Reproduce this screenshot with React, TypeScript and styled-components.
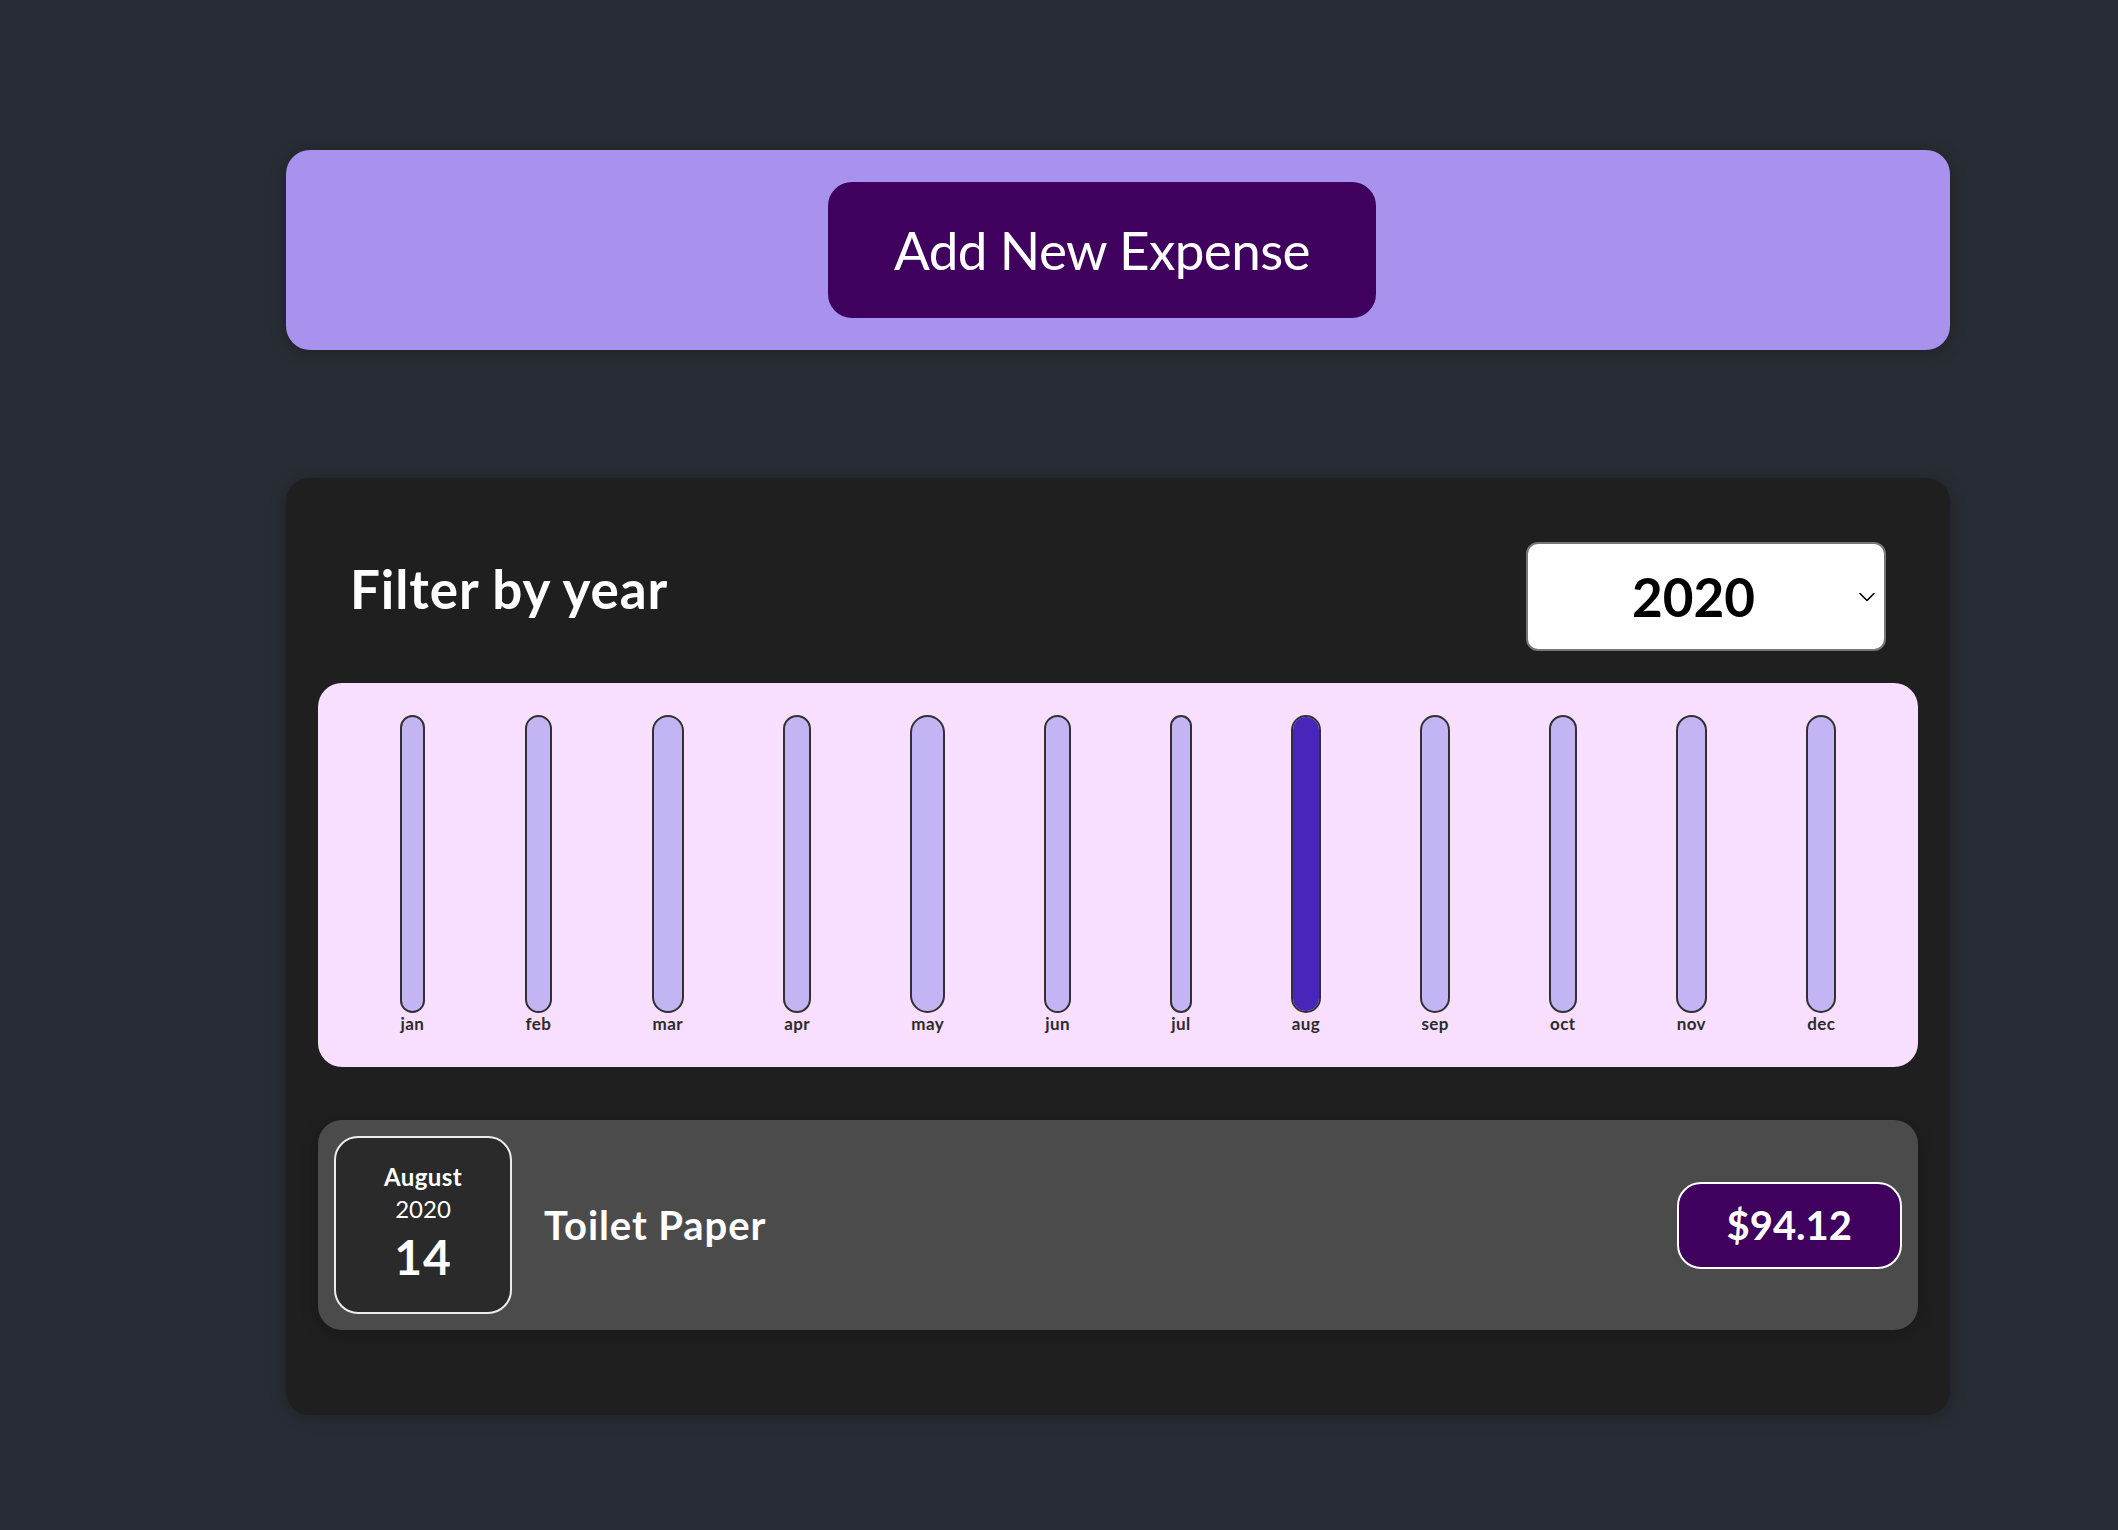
import React from "react";
import styled, { createGlobalStyle } from "styled-components";

const GlobalStyle = createGlobalStyle`
  html, body {
    margin: 0;
    padding: 0;
    background-color: #282c34;
    font-family: "Lato", "Open Sans", sans-serif;
  }
  * { box-sizing: border-box; }
`;

const Page = styled.div`
  display: flex;
  flex-direction: column;
  gap: 128px;
  padding: 150px 0 114px 286px;
`;

const Card = styled.div`
  width: 1664px;
  padding: 32px;
  border-radius: 24px;
  box-shadow: 0 2px 16px rgba(0, 0, 0, 0.25);
`;

const NewExpenseCard = styled(Card)`
  background-color: #a892ee;
  text-align: center;
`;

const AddButton = styled.button`
  font-family: "Lato", "Open Sans", sans-serif;
  font-size: 53px;
  line-height: 68px;
  letter-spacing: -0.6px;
  padding: 32px 64px;
  border: 2px solid #40005d;
  background-color: #40005d;
  color: #ffffff;
  border-radius: 24px;
  margin-right: 32px;
  cursor: pointer;
`;

const ExpensesCard = styled(Card)`
  background-color: #1f1f1f;
`;

const FilterBar = styled.div`
  color: #ffffff;
  padding: 0 32px;
`;

const FilterControl = styled.div`
  display: flex;
  width: 100%;
  align-items: center;
  justify-content: space-between;
  margin: 32px 0;
`;

const FilterLabel = styled.label`
  font-weight: 700;
  font-size: 53px;
  line-height: 70px;
  letter-spacing: 0.9px;
  margin-bottom: 16px;
`;

const SelectWrap = styled.div`
  position: relative;
  width: 360px;
  height: 109px;
`;

const YearSelect = styled.select`
  appearance: none;
  -webkit-appearance: none;
  width: 100%;
  height: 100%;
  font-family: "Lato", "Open Sans", sans-serif;
  font-size: 53px;
  font-weight: 700;
  color: #000000;
  background-color: #ffffff;
  border: 2px solid #767676;
  border-radius: 12px;
  padding: 0 0 0 104px;
  outline: none;
`;

const Chevron = styled.svg`
  position: absolute;
  right: 11px;
  top: 50%;
  transform: translateY(-50%);
  pointer-events: none;
`;

const Chart = styled.div`
  box-sizing: content-box;
  padding: 32px;
  border-radius: 24px;
  background-color: #f8dfff;
  text-align: center;
  display: flex;
  justify-content: space-around;
  height: 320px;
`;

const BarColumn = styled.div`
  height: 100%;
  display: flex;
  flex-direction: column;
  align-items: center;
`;

const BarInner = styled.div`
  flex: 1;
  width: calc(100% + 2px);
  border: 2px solid #313131;
  border-radius: 24px;
  background-color: #c3b4f3;
  overflow: hidden;
  display: flex;
  flex-direction: column;
  justify-content: flex-end;
`;

const BarFill = styled.div`
  background-color: #4826b9;
  width: 100%;
`;

const BarLabel = styled.div`
  font-weight: 700;
  font-size: 17px;
  line-height: 22px;
  letter-spacing: 0.4px;
  color: #2b2b2b;
  text-align: center;
`;

const ExpenseList = styled.ul`
  list-style: none;
  padding: 0;
  margin: 53px 0;
`;

const ExpenseRow = styled.li`
  display: flex;
  justify-content: space-between;
  align-items: center;
  padding: 16px;
  border-radius: 24px;
  background-color: #4b4b4b;
  box-shadow: 0 4px 16px rgba(0, 0, 0, 0.25);
`;

const DateBox = styled.div`
  display: flex;
  flex-direction: column;
  width: 178px;
  height: 178px;
  border: 2px solid #ececec;
  background-color: #2a2a2a;
  color: #ffffff;
  border-radius: 24px;
  align-items: center;
  justify-content: center;
  flex-shrink: 0;
`;

const DateMonth = styled.div`
  font-size: 24px;
  line-height: 32px;
  font-weight: 700;
  letter-spacing: 0.4px;
`;

const DateYear = styled.div`
  font-size: 24px;
  line-height: 32px;
`;

const DateDay = styled.div`
  font-size: 48px;
  line-height: 64px;
  font-weight: 700;
  letter-spacing: 1px;
`;

const Description = styled.div`
  display: flex;
  flex: 1;
  align-items: center;
  justify-content: flex-start;
`;

const Title = styled.h2`
  font-size: 40px;
  line-height: 53px;
  font-weight: 700;
  letter-spacing: 0.9px;
  flex: 1;
  margin: 0 32px;
  color: #ffffff;
`;

const Price = styled.div`
  font-size: 40px;
  line-height: 51px;
  font-weight: 700;
  color: #ffffff;
  background-color: #40005d;
  border: 2px solid #ffffff;
  padding: 16px 48px;
  border-radius: 24px;
`;

const months = ["jan", "feb", "mar", "apr", "may", "jun", "jul", "aug", "sep", "oct", "nov", "dec"];
const values = [0, 0, 0, 0, 0, 0, 0, 94.12, 0, 0, 0, 0];
const maxValue = Math.max(...values);

export default function App() {
  return (
    <>
      <GlobalStyle />
      <Page>
        <NewExpenseCard>
          <AddButton>Add New Expense</AddButton>
        </NewExpenseCard>
        <ExpensesCard>
          <FilterBar>
            <FilterControl>
              <FilterLabel>Filter by year</FilterLabel>
              <SelectWrap>
                <YearSelect defaultValue="2020">
                  <option value="2022">2022</option>
                  <option value="2021">2021</option>
                  <option value="2020">2020</option>
                  <option value="2019">2019</option>
                </YearSelect>
                <Chevron width="16" height="9" viewBox="0 0 16 9" fill="none">
                  <path d="M1 1l7 7 7-7" stroke="#000" strokeWidth="1.6" strokeLinecap="round" strokeLinejoin="round" />
                </Chevron>
              </SelectWrap>
            </FilterControl>
          </FilterBar>
          <Chart>
            {months.map((m, i) => (
              <BarColumn key={m}>
                <BarInner>
                  <BarFill style={{ height: `${maxValue > 0 ? Math.round((values[i] / maxValue) * 100) : 0}%` }} />
                </BarInner>
                <BarLabel>{m}</BarLabel>
              </BarColumn>
            ))}
          </Chart>
          <ExpenseList>
            <ExpenseRow>
              <DateBox>
                <DateMonth>August</DateMonth>
                <DateYear>2020</DateYear>
                <DateDay>14</DateDay>
              </DateBox>
              <Description>
                <Title>Toilet Paper</Title>
                <Price>$94.12</Price>
              </Description>
            </ExpenseRow>
          </ExpenseList>
        </ExpensesCard>
      </Page>
    </>
  );
}
